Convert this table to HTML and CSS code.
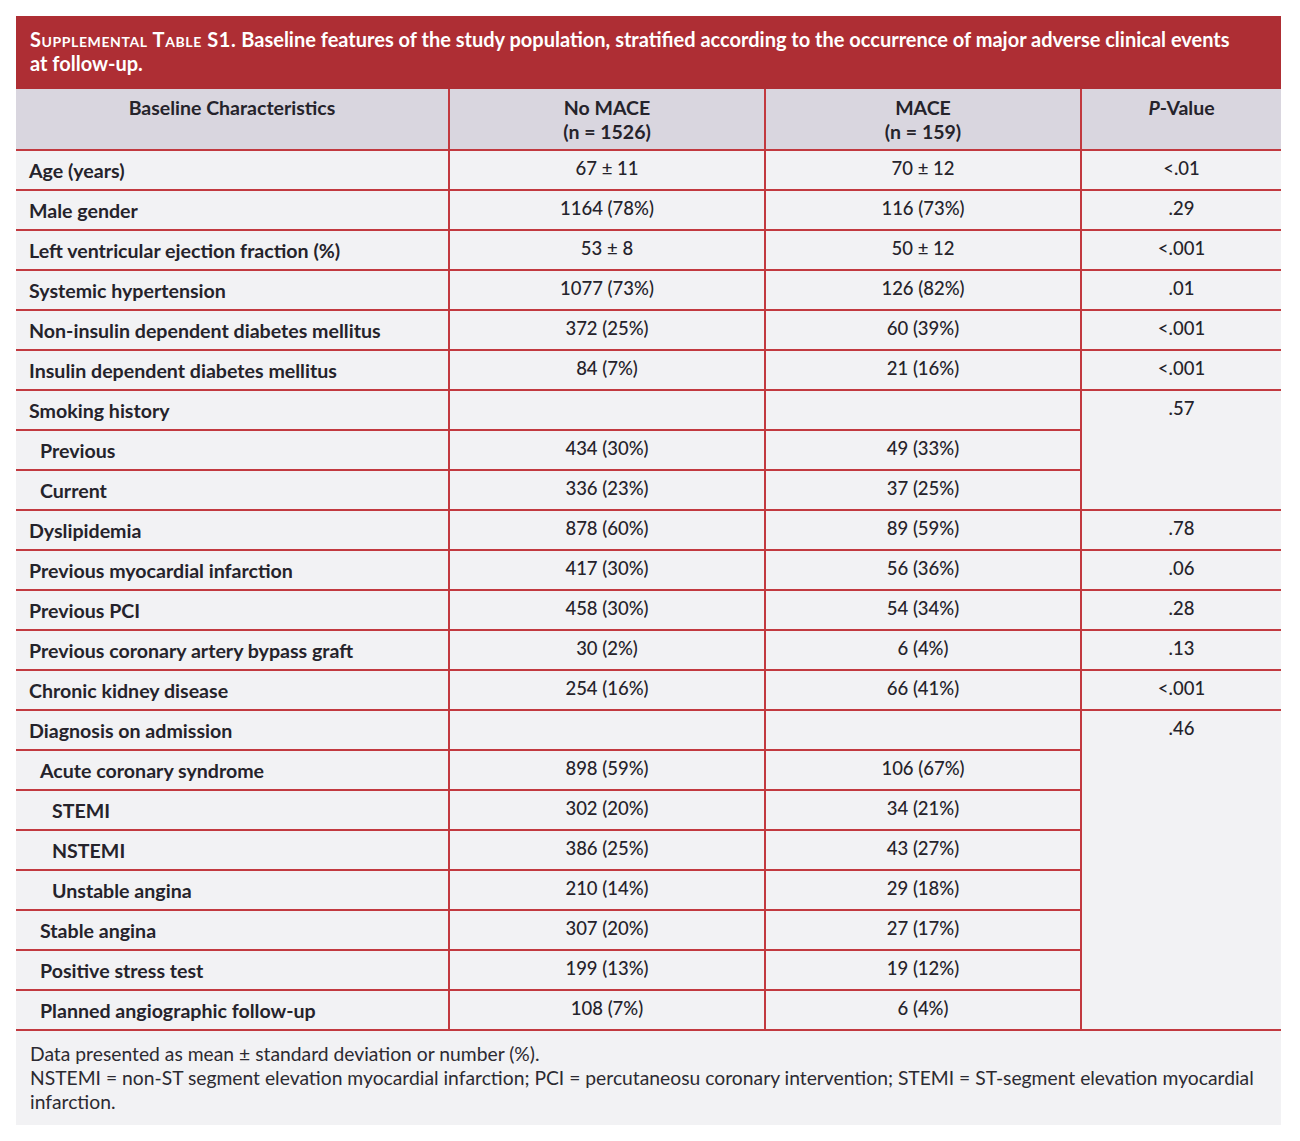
FILE: index.html
```html
<!DOCTYPE html>
<html lang="en">
<head>
<meta charset="utf-8">
<title>Supplemental Table S1</title>
<link rel="stylesheet" href="styles.css">
</head>
<body>
<div class="wrap">
  <div class="caption"><span class="sc">Supplemental Table S1.</span> Baseline features of the study population, stratified according to the occurrence of major adverse clinical events at follow-up.</div>
  <table class="tbl">
    <colgroup>
      <col class="c1"><col class="c2"><col class="c3"><col class="c4">
    </colgroup>
    <thead>
      <tr>
        <th>Baseline Characteristics</th>
        <th>No MACE<br>(n = 1526)</th>
        <th>MACE<br>(n = 159)</th>
        <th><i>P</i>-Value</th>
      </tr>
    </thead>
    <tbody>
      <tr><td class="lbl">Age (years)</td><td>67 ± 11</td><td>70 ± 12</td><td>&lt;.01</td></tr>
      <tr><td class="lbl">Male gender</td><td>1164 (78%)</td><td>116 (73%)</td><td>.29</td></tr>
      <tr><td class="lbl">Left ventricular ejection fraction (%)</td><td>53 ± 8</td><td>50 ± 12</td><td>&lt;.001</td></tr>
      <tr><td class="lbl">Systemic hypertension</td><td>1077 (73%)</td><td>126 (82%)</td><td>.01</td></tr>
      <tr><td class="lbl">Non-insulin dependent diabetes mellitus</td><td>372 (25%)</td><td>60 (39%)</td><td>&lt;.001</td></tr>
      <tr><td class="lbl">Insulin dependent diabetes mellitus</td><td>84 (7%)</td><td>21 (16%)</td><td>&lt;.001</td></tr>
      <tr><td class="lbl">Smoking history</td><td></td><td></td><td rowspan="3">.57</td></tr>
      <tr><td class="lbl ind1">Previous</td><td>434 (30%)</td><td>49 (33%)</td></tr>
      <tr><td class="lbl ind1">Current</td><td>336 (23%)</td><td>37 (25%)</td></tr>
      <tr><td class="lbl">Dyslipidemia</td><td>878 (60%)</td><td>89 (59%)</td><td>.78</td></tr>
      <tr><td class="lbl">Previous myocardial infarction</td><td>417 (30%)</td><td>56 (36%)</td><td>.06</td></tr>
      <tr><td class="lbl">Previous PCI</td><td>458 (30%)</td><td>54 (34%)</td><td>.28</td></tr>
      <tr><td class="lbl">Previous coronary artery bypass graft</td><td>30 (2%)</td><td>6 (4%)</td><td>.13</td></tr>
      <tr><td class="lbl">Chronic kidney disease</td><td>254 (16%)</td><td>66 (41%)</td><td>&lt;.001</td></tr>
      <tr><td class="lbl">Diagnosis on admission</td><td></td><td></td><td rowspan="8">.46</td></tr>
      <tr><td class="lbl ind1">Acute coronary syndrome</td><td>898 (59%)</td><td>106 (67%)</td></tr>
      <tr><td class="lbl ind2">STEMI</td><td>302 (20%)</td><td>34 (21%)</td></tr>
      <tr><td class="lbl ind2">NSTEMI</td><td>386 (25%)</td><td>43 (27%)</td></tr>
      <tr><td class="lbl ind2">Unstable angina</td><td>210 (14%)</td><td>29 (18%)</td></tr>
      <tr><td class="lbl ind1">Stable angina</td><td>307 (20%)</td><td>27 (17%)</td></tr>
      <tr><td class="lbl ind1">Positive stress test</td><td>199 (13%)</td><td>19 (12%)</td></tr>
      <tr><td class="lbl ind1">Planned angiographic follow-up</td><td>108 (7%)</td><td>6 (4%)</td></tr>
    </tbody>
  </table>
  <div class="notes">
    <p>Data presented as mean ± standard deviation or number (%).</p>
    <p>NSTEMI = non-ST segment elevation myocardial infarction; PCI = percutaneosu coronary intervention; STEMI = ST-segment elevation myocardial infarction.</p>
  </div>
</div>
</body>
</html>
```
FILE: styles.css
```css
html, body {
  margin: 0;
  padding: 0;
  background: #ffffff;
}
body {
  font-family: Lato, "Noto Sans", "Liberation Sans", sans-serif;
  color: #25232b;
}
.wrap {
  width: 1265px;
  margin: 16px 0 0 16px;
}
.caption {
  background: #ae2e34;
  color: #ffffff;
  font-weight: 700;
  font-size: 20px;
  line-height: 24px;
  height: 73px;
  box-sizing: border-box;
  padding: 11px 30px 0 14px;
}
.sc {
  font-variant: small-caps;
  letter-spacing: 0.03em;
}
.tbl {
  width: 100%;
  border-collapse: collapse;
  table-layout: fixed;
  background: #f2f2f4;
}
.c1 { width: 433px; }
.c2 { width: 316px; }
.c3 { width: 316px; }
.c4 { width: 200px; }
.tbl th {
  background: #d9d6df;
  font-weight: 700;
  font-size: 19.5px;
  line-height: 24px;
  height: 60px;
  box-sizing: border-box;
  padding: 7px 8px 5px;
  vertical-align: top;
  text-align: center;
  border-left: 2px solid #c2393f;
  border-bottom: 2px solid #c2393f;
}
.tbl th i {
  font-style: italic;
}
.tbl td {
  font-size: 18.5px;
  line-height: 24px;
  height: 40px;
  box-sizing: border-box;
  padding: 5px 8px 8px;
  vertical-align: top;
  text-align: center;
  border-left: 2px solid #c2393f;
  border-bottom: 2px solid #c2393f;
  font-weight: 500;
}
.tbl th:first-child,
.tbl td.lbl {
  border-left: none;
}
.tbl td.lbl {
  text-align: left;
  font-weight: 700;
  font-size: 19.6px;
  padding: 8px 8px 6px 13px;
}
.tbl td.ind1 { padding-left: 24px; }
.tbl td.ind2 { padding-left: 36px; }
.notes {
  background: #f2f2f4;
  padding: 11px 14px 11px;
  font-size: 19.3px;
  line-height: 24px;
  color: #2c2a31;
}
.notes p {
  margin: 0;
}
```
